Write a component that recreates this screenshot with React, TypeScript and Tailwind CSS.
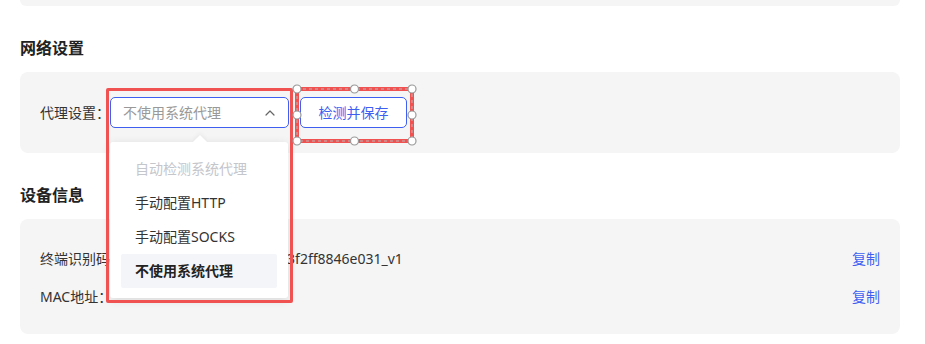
import { ChevronUp } from "lucide-react";

const font = { fontFamily: '"Noto Sans", "Noto Sans CJK SC", sans-serif' };

const proxyOptions = [
  { label: "自动检测系统代理", disabled: true },
  { label: "手动配置HTTP" },
  { label: "手动配置SOCKS" },
  { label: "不使用系统代理", selected: true },
];

function SelectionBox() {
  // dashed selection frame with resize handles (drawn over the button)
  const w = 127;
  const h = 64;
  const pts = [
    [6, 6], [w / 2, 6], [w - 6, 6],
    [6, h / 2], [w - 6, h / 2],
    [6, h - 6], [w / 2, h - 6], [w - 6, h - 6],
  ];
  return (
    <svg className="absolute left-[291px] top-[83px]" width={w} height={h} viewBox={`0 0 ${w} ${h}`}>
      <rect x="6" y="6" width={w - 12} height={h - 12} fill="none" stroke="#f05252" strokeWidth="4" />
      <rect x="6" y="6" width={w - 12} height={h - 12} fill="none" stroke="#b8b8b8" strokeWidth="1" strokeDasharray="3 3" />
      {pts.map(([cx, cy], i) => (
        <circle key={i} cx={cx} cy={cy} r="4" fill="#fff" stroke="#999" strokeWidth="1.2" />
      ))}
    </svg>
  );
}

export default function App() {
  return (
    <div className="relative w-[925px] h-[344px] overflow-hidden bg-white px-5 text-[14px] text-[#333]" style={font}>
      <div className="h-[6px] w-[880px] rounded-b-lg bg-[#f5f5f5]" />

      <h2 className="mt-[30px] mb-3 text-[16px] font-bold leading-6 text-[#222]">网络设置</h2>
      <div className="flex h-[81px] w-[880px] items-center rounded-lg bg-[#f5f5f5] px-5">
        <span className="w-[70px] shrink-0 leading-5">代理设置：</span>
        <div className="flex h-[31px] w-[179px] items-center justify-between rounded-[5px] border border-[#3f5ff0] bg-white pl-3 pr-[10px]">
          <span className="text-[#999] leading-5">不使用系统代理</span>
          <ChevronUp size={16} strokeWidth={1.8} className="text-[#666]" />
        </div>
        <button className="ml-[11px] h-[31px] w-[107px] rounded-[5px] border border-[#3f5ff0] bg-white text-[#3f5ff0] leading-5">
          检测并保存
        </button>
      </div>

      <h2 className="mt-[30px] mb-3 text-[16px] font-bold leading-6 text-[#222]">设备信息</h2>
      <div className="flex h-[115px] w-[880px] flex-col gap-[14px] rounded-lg bg-[#f5f5f5] px-5 pt-[27px]">
        <div className="flex h-6 items-center justify-between">
          <span>终端识别码：9b2e7c41d05a6f8e7c1a53f2ff8846e031_v1</span>
          <span className="text-[#3f5ff0]">复制</span>
        </div>
        <div className="flex h-6 items-center justify-between">
          <span>MAC地址：</span>
          <span className="text-[#3f5ff0]">复制</span>
        </div>
      </div>

      {/* open dropdown */}
      <div className="absolute left-[110px] top-[142px] w-[178px] h-[156px] rounded-[3px] bg-white px-[11px] pt-[10px] shadow-[0_2px_10px_rgba(0,0,0,0.12)]">
        <div className="absolute -top-[5px] left-[85px] h-[10px] w-[10px] rotate-45 bg-white shadow-[-2px_-2px_4px_rgba(0,0,0,0.04)]" />
        {proxyOptions.map((o) => (
          <div
            key={o.label}
            className={`relative flex h-[34px] items-center rounded-[2px] pl-[14px] leading-5 ${
              o.disabled ? "text-[#c4c6cc]" : o.selected ? "bg-[#f4f5f9] font-bold text-[#222]" : "text-[#333]"
            }`}
          >
            {o.label}
          </div>
        ))}
      </div>

      {/* red annotation frame around the select */}
      <div className="absolute left-[106px] top-[88px] h-[215px] w-[187px] rounded-[2px] border-[3px] border-[#f05252]" />
      <SelectionBox />
    </div>
  );
}
